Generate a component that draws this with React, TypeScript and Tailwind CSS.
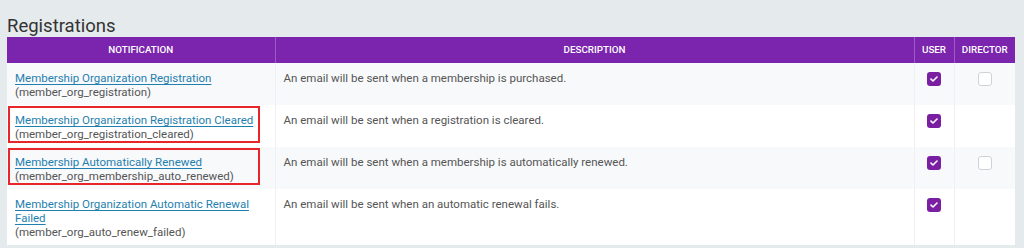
import React from "react";

interface Row {
  title: string[];
  code: string;
  description: string;
  user: boolean;
  director: boolean | null;
  flagged: boolean;
}

const ROWS: Row[] = [
  {
    title: ["Membership Organization Registration"],
    code: "(member_org_registration)",
    description: "An email will be sent when a membership is purchased.",
    user: true,
    director: false,
    flagged: false,
  },
  {
    title: ["Membership Organization Registration Cleared"],
    code: "(member_org_registration_cleared)",
    description: "An email will be sent when a registration is cleared.",
    user: true,
    director: null,
    flagged: true,
  },
  {
    title: ["Membership Automatically Renewed"],
    code: "(member_org_membership_auto_renewed)",
    description: "An email will be sent when a membership is automatically renewed.",
    user: true,
    director: false,
    flagged: true,
  },
  {
    title: ["Membership Organization Automatic Renewal", "Failed"],
    code: "(member_org_auto_renew_failed)",
    description: "An email will be sent when an automatic renewal fails.",
    user: true,
    director: null,
    flagged: false,
  },
];

function Check({ on }: { on: boolean }) {
  if (!on)
    return <div className="w-[14px] h-[14px] rounded-[3px] border border-[#cfd3d8] bg-white" />;
  return (
    <div className="w-[14px] h-[14px] rounded-[3px] bg-[#7b1fa2] flex items-center justify-center">
      <svg width="8" height="6" viewBox="0 0 8 6" fill="none">
        <path d="M1 3.1L3 5L7 1" stroke="#fff" strokeWidth="1.6" strokeLinecap="round" strokeLinejoin="round" />
      </svg>
    </div>
  );
}

export default function App() {
  return (
    <div
      className="w-[1024px] h-[248px] overflow-hidden bg-[#e5eaed] pl-[7px]"
      style={{ fontFamily: "Roboto, 'Liberation Sans', sans-serif" }}
    >
      <h2 className="pt-[16px] h-[37px] text-[18.5px] leading-[21px] text-[#333] font-normal">Registrations</h2>

      <table className="w-[1008px] table-fixed border-collapse">
        <colgroup>
          <col className="w-[268px]" />
          <col className="w-[639px]" />
          <col className="w-[40px]" />
          <col className="w-[61px]" />
        </colgroup>
        <thead>
          <tr className="h-[26px] bg-[#7b24ae] text-white text-[9.8px] font-medium uppercase">
            <th className="font-medium border-r border-[#9a5bc4]">Notification</th>
            <th className="font-medium border-r border-[#9a5bc4]">Description</th>
            <th className="font-medium border-r border-[#9a5bc4]">User</th>
            <th className="font-medium">Director</th>
          </tr>
        </thead>
        <tbody>
          {ROWS.map((row, i) => (
            <tr key={i} className={i % 2 === 0 ? "bg-[#f8f9fb]" : "bg-white"}>
              <td className="relative align-top pl-[8px] pr-2 pt-[8px] pb-[6px] text-[11.5px] leading-[14px] border-r border-[#eef0f3]">
                <a href="#" className="text-[#1f7fae] underline underline-offset-[2px] block">
                  {row.title.map((t, j) => (
                    <span key={j} className="block">{t}</span>
                  ))}
                </a>
                <div className="text-[#555]">{row.code}</div>
                {row.flagged && (
                  <div className="absolute left-[1px] top-[1px] w-[252px] bottom-[4px] border-2 border-[#e8262a]" />
                )}
              </td>
              <td className="align-top px-[8px] pt-[8px] text-[11.5px] leading-[14px] text-[#555] border-r border-[#eef0f3]">
                {row.description}
              </td>
              <td className="align-top pt-[9px] border-r border-[#eef0f3]">
                <div className="flex justify-center">
                  <Check on={row.user} />
                </div>
              </td>
              <td className="align-top pt-[9px]">
                {row.director !== null && (
                  <div className="flex justify-center">
                    <Check on={row.director} />
                  </div>
                )}
              </td>
            </tr>
          ))}
        </tbody>
      </table>
    </div>
  );
}
